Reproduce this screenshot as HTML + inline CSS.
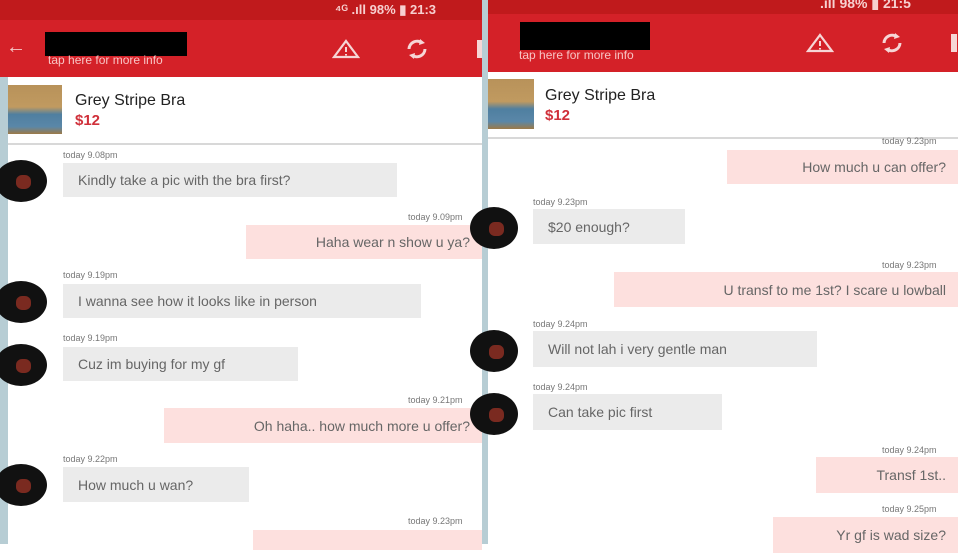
<!DOCTYPE html><html><head><style>
*{margin:0;padding:0;box-sizing:border-box}
body{width:958px;height:544px;overflow:hidden;background:#fff;font-family:"Liberation Sans",sans-serif;position:relative}
.a{position:absolute}
.sb{background:#c01a1c}
.tb{background:#d42128}
.blk{background:#000}
.sub{color:#f8c4c4;font-size:12px}
.title{font-size:16px;color:#222}
.price{font-size:15px;color:#d0303a;font-weight:bold}
.t{font-size:9px;color:#777}
.g{background:#ebebeb;color:#666;font-size:14px;padding-left:15px;display:flex;align-items:center}
.p{background:#fde0de;color:#666;font-size:14px;justify-content:flex-end;padding-right:12px;display:flex;align-items:center}
.av{background:#111;border-radius:50%;overflow:hidden}
.av::after{content:"";position:absolute;left:40%;top:35%;width:30%;height:35%;background:#7a2a20;border-radius:40%}
.img{background:linear-gradient(180deg,#b8925a 0%,#c09a60 45%,#4f7fa0 60%,#5a87a8 85%,#9c7a48 100%)}
.strip{background:#b7cdd4}
.line{background:#d8d8d8;height:2px}
</style></head><body>
<div class="a sb" style="left:0;top:0;width:482px;height:20px"></div>
<div class="a" style="left:335px;top:2px;font-size:13px;color:#f7d0d0;font-weight:bold">⁴ᴳ .ıll 98% ▮ 21:3</div>
<div class="a tb" style="left:0;top:20px;width:482px;height:57px"></div>
<div class="a" style="left:6px;top:36px;color:#f6c7c7;font-size:20px">←</div>
<div class="a blk" style="left:45px;top:32px;width:142px;height:24px"></div>
<div class="a sub" style="left:48px;top:53px">tap here for more info</div>
<svg class="a" style="left:332px;top:39px" width="28" height="20" viewBox="0 0 28 20"><path d="M14 2L26 18H2Z" fill="none" stroke="#f6d6d6" stroke-width="2.2"/><path d="M14 8v5M14 15v1.5" stroke="#f6d6d6" stroke-width="2"/></svg>
<svg class="a" style="left:404px;top:37px" width="26" height="24" viewBox="0 0 26 24"><path d="M5 12a8 8 0 0 1 13-6M21 12a8 8 0 0 1-13 6" fill="none" stroke="#f6d6d6" stroke-width="3"/><path d="M16 2l5 4-6 2z M10 22l-5-4 6-2z" fill="#f6d6d6"/></svg>
<div class="a" style="left:477px;top:40px;width:5px;height:18px;background:#f6d6d6"></div>
<div class="a strip" style="left:0;top:77px;width:8px;height:467px"></div>
<div class="a img" style="left:8px;top:85px;width:54px;height:49px"></div>
<div class="a title" style="left:75px;top:92px">Grey Stripe Bra</div>
<div class="a price" style="left:75px;top:112px">$12</div>
<div class="a line" style="left:8px;top:143px;width:474px"></div>

<div class="a t" style="left:63px;top:150px">today 9.08pm</div>
<div class="a av" style="left:-5px;top:160px;width:52px;height:42px"></div>
<div class="a g" style="left:63px;top:163px;width:334px;height:34px">Kindly take a pic with the bra first?</div>
<div class="a t" style="left:408px;top:212px">today 9.09pm</div>
<div class="a p" style="left:246px;top:225px;width:236px;height:34px">Haha wear n show u ya?</div>
<div class="a t" style="left:63px;top:270px">today 9.19pm</div>
<div class="a av" style="left:-5px;top:281px;width:52px;height:42px"></div>
<div class="a g" style="left:63px;top:284px;width:358px;height:34px">I wanna see how it looks like in person</div>
<div class="a t" style="left:63px;top:333px">today 9.19pm</div>
<div class="a av" style="left:-5px;top:344px;width:52px;height:42px"></div>
<div class="a g" style="left:63px;top:347px;width:235px;height:34px">Cuz im buying for my gf</div>
<div class="a t" style="left:408px;top:395px">today 9.21pm</div>
<div class="a p" style="left:164px;top:408px;width:318px;height:35px">Oh haha.. how much more u offer?</div>
<div class="a t" style="left:63px;top:454px">today 9.22pm</div>
<div class="a av" style="left:-5px;top:464px;width:52px;height:42px"></div>
<div class="a g" style="left:63px;top:467px;width:186px;height:35px">How much u wan?</div>
<div class="a t" style="left:408px;top:516px">today 9.23pm</div>
<div class="a p" style="left:253px;top:530px;width:229px;height:20px"></div>

<div class="a strip" style="left:482px;top:0;width:6px;height:544px"></div>

<div class="a sb" style="left:488px;top:0;width:470px;height:14px"></div>
<div class="a" style="left:820px;top:-5px;font-size:14px;color:#f7d0d0;font-weight:bold">.ıll 98% ▮ 21:5</div>
<div class="a tb" style="left:488px;top:14px;width:470px;height:58px"></div>
<div class="a blk" style="left:520px;top:22px;width:130px;height:28px"></div>
<div class="a sub" style="left:519px;top:48px">tap here for more info</div>
<svg class="a" style="left:806px;top:33px" width="28" height="20" viewBox="0 0 28 20"><path d="M14 2L26 18H2Z" fill="none" stroke="#f6d6d6" stroke-width="2.2"/><path d="M14 8v5M14 15v1.5" stroke="#f6d6d6" stroke-width="2"/></svg>
<svg class="a" style="left:879px;top:31px" width="26" height="24" viewBox="0 0 26 24"><path d="M5 12a8 8 0 0 1 13-6M21 12a8 8 0 0 1-13 6" fill="none" stroke="#f6d6d6" stroke-width="3"/><path d="M16 2l5 4-6 2z M10 22l-5-4 6-2z" fill="#f6d6d6"/></svg>
<div class="a" style="left:951px;top:34px;width:6px;height:18px;background:#f6d6d6"></div>
<div class="a img" style="left:488px;top:79px;width:46px;height:50px"></div>
<div class="a title" style="left:545px;top:87px">Grey Stripe Bra</div>
<div class="a price" style="left:545px;top:107px">$12</div>
<div class="a line" style="left:488px;top:137px;width:470px"></div>

<div class="a t" style="left:882px;top:136px">today 9.23pm</div>
<div class="a p" style="left:727px;top:150px;width:231px;height:34px">How much u can offer?</div>
<div class="a t" style="left:533px;top:197px">today 9.23pm</div>
<div class="a av" style="left:470px;top:207px;width:48px;height:42px"></div>
<div class="a g" style="left:533px;top:209px;width:152px;height:35px">$20 enough?</div>
<div class="a t" style="left:882px;top:260px">today 9.23pm</div>
<div class="a p" style="left:614px;top:272px;width:344px;height:35px">U transf to me 1st? I scare u lowball</div>
<div class="a t" style="left:533px;top:319px">today 9.24pm</div>
<div class="a av" style="left:470px;top:330px;width:48px;height:42px"></div>
<div class="a g" style="left:533px;top:331px;width:284px;height:36px">Will not lah i very gentle man</div>
<div class="a t" style="left:533px;top:382px">today 9.24pm</div>
<div class="a av" style="left:470px;top:393px;width:48px;height:42px"></div>
<div class="a g" style="left:533px;top:394px;width:189px;height:36px">Can take pic first</div>
<div class="a t" style="left:882px;top:445px">today 9.24pm</div>
<div class="a p" style="left:816px;top:457px;width:142px;height:36px">Transf 1st..</div>
<div class="a t" style="left:882px;top:504px">today 9.25pm</div>
<div class="a p" style="left:773px;top:517px;width:185px;height:36px;align-items:flex-start;padding-top:10px">Yr gf is wad size?</div>
</body></html>
